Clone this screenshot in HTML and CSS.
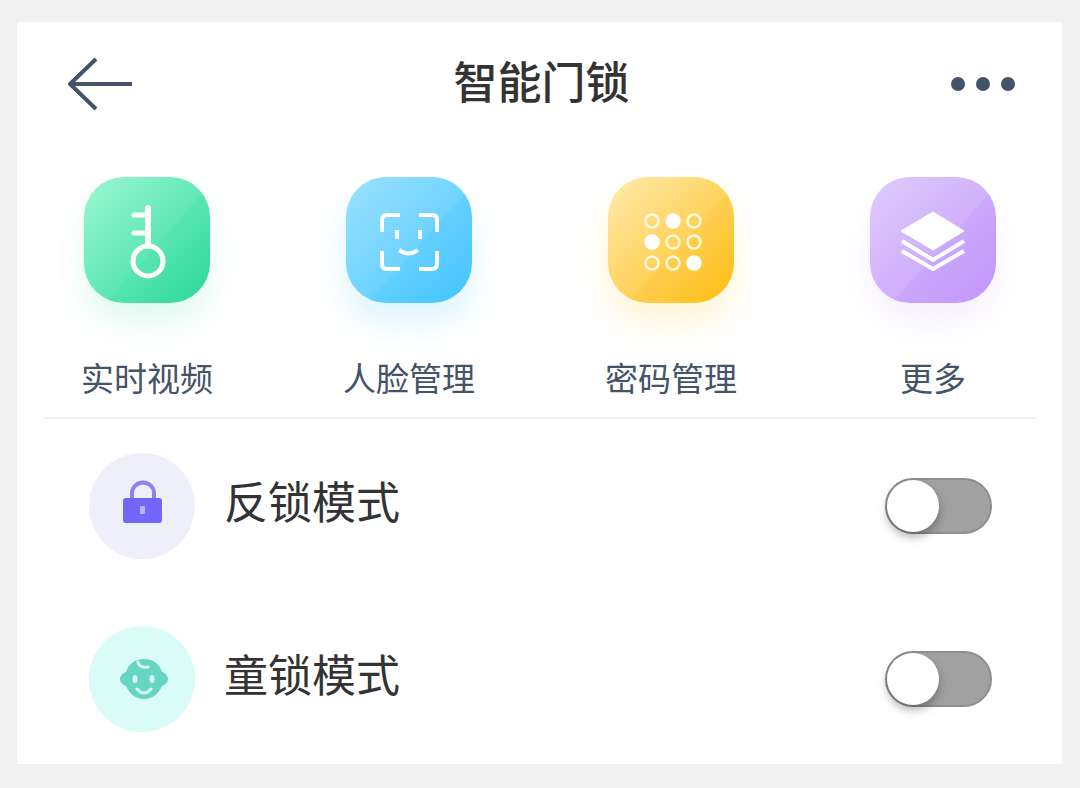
FILE: index.html
```html
<!DOCTYPE html>
<html lang="zh-CN">
<head>
<meta charset="utf-8">
<meta name="viewport" content="width=device-width, initial-scale=1">
<title>智能门锁</title>
<link rel="stylesheet" href="styles.css">
</head>
<body>
<main class="card">
  <header class="topbar">
    <button class="icon-button" type="button" aria-label="返回">
      <svg width="66" height="56" viewBox="0 0 66 56" fill="none" stroke="#445468" stroke-width="4">
        <path d="M65 28H4"/><path d="M29 3 3 28l26 25" stroke-linejoin="round"/>
      </svg>
    </button>
    <h1 class="title">智能门锁</h1>
    <button class="icon-button" type="button" aria-label="菜单">
      <svg width="66" height="56" viewBox="0 0 66 56" fill="#445468">
        <circle cx="8" cy="28" r="7"/><circle cx="33" cy="28" r="7"/><circle cx="58" cy="28" r="7"/>
      </svg>
    </button>
  </header>

  <nav class="actions" aria-label="快捷功能">
    <button class="action" type="button">
      <svg class="tile tile-green" viewBox="0 0 126 126" fill="none" stroke="#fff">
        <path class="sheen" d="M130 4 18 130H130z"/>
        <circle cx="64" cy="84" r="15" stroke-width="5"/>
        <path d="M64 69V31" stroke-width="6" stroke-linecap="round"/>
        <path d="M64 38H50M64 56H50" stroke-width="5" stroke-linecap="round"/>
      </svg>
      <span class="action-label">实时视频</span>
    </button>
    <button class="action" type="button">
      <svg class="tile tile-blue" viewBox="0 0 126 126" fill="none" stroke="#fff">
        <path class="sheen" d="M130 4 18 130H130z"/>
        <path d="M36 55V43q0-5 5-5H54M73 38H86q5 0 5 5V55M91 74V87q0 5-5 5H73M54 92H41q-5 0-5-5V74" stroke-width="4"/>
        <path d="M51 53v9M74 53v9" stroke-width="4"/>
        <path d="M53 73Q63 80 72 73" stroke-width="4"/>
      </svg>
      <span class="action-label">人脸管理</span>
    </button>
    <button class="action" type="button">
      <svg class="tile tile-yellow" viewBox="0 0 126 126" fill="none" stroke="#fff" stroke-width="2.5">
        <path class="sheen" d="M130 4 18 130H130z"/>
        <g stroke="#fff9df">
          <circle cx="44" cy="44" r="6.5"/><circle cx="86" cy="44" r="6.5"/>
          <circle cx="65" cy="65" r="6.5"/><circle cx="86" cy="65" r="6.5"/>
          <circle cx="44" cy="86" r="6.5"/><circle cx="65" cy="86" r="6.5"/>
        </g>
        <g fill="#fff">
          <circle cx="65" cy="44" r="6.5"/><circle cx="44" cy="65" r="6.5"/><circle cx="86" cy="86" r="6.5"/>
        </g>
      </svg>
      <span class="action-label">密码管理</span>
    </button>
    <button class="action" type="button">
      <svg class="tile tile-purple" viewBox="0 0 126 126" fill="none" stroke="#fff">
        <path class="sheen" d="M130 4 18 130H130z"/>
        <path d="M63 35 94 54 63 73 31 54z" fill="#fff" stroke-width="1" stroke-linejoin="round"/>
        <path d="M32 64 63 83 94 64M32 74 63 92 94 74" stroke-width="4"/>
      </svg>
      <span class="action-label">更多</span>
    </button>
  </nav>

  <section class="modes">
    <div class="mode">
      <span class="badge badge-lock">
        <svg width="106" height="106" viewBox="0 0 106 106">
          <path d="M43 48V40a11 10.500 0 0 1 22 0V48" fill="none" stroke="#8b83f3" stroke-width="4"/>
          <rect x="34" y="45" width="39" height="25" rx="3" fill="#7267f8"/>
          <rect x="51" y="53" width="5" height="8" rx="1" fill="#b8b4fb"/>
        </svg>
      </span>
      <label class="mode-label" for="back-lock">反锁模式</label>
      <input class="switch" type="checkbox" role="switch" id="back-lock">
    </div>
    <div class="mode">
      <span class="badge badge-child">
        <svg width="106" height="106" viewBox="0 0 106 106">
          <path d="M55 33c10 0 16 6 18 13 3 1 6 4 6 7s-3 6-6 7c-3 7-9 13-18 13s-15-6-18-13c-3-1-6-4-6-7s3-6 6-7c2-7 8-13 18-13z" fill="#67d5c3"/>
          <path d="M49 36q1 6 10 5" fill="none" stroke="#d5faf3" stroke-width="3" stroke-linecap="round"/>
          <ellipse cx="46" cy="53" rx="2.500" ry="4" fill="#d5faf3"/><ellipse cx="63" cy="53" rx="2.500" ry="4" fill="#d5faf3"/>
          <path d="M48 63q7 8 14 0" fill="none" stroke="#d5faf3" stroke-width="3" stroke-linecap="round"/>
        </svg>
      </span>
      <label class="mode-label" for="child-lock">童锁模式</label>
      <input class="switch" type="checkbox" role="switch" id="child-lock">
    </div>
  </section>
</main>
</body>
</html>
```
FILE: styles.css
```css
* {
  box-sizing: border-box;
}

body {
  margin: 0;
  padding: 22px 18px 24px 17px;
  background: #f1f1f1;
  color: #333;
  font-family: "Noto Sans CJK SC", sans-serif;
}

button {
  padding: 0;
  border: 0;
  background: none;
  color: inherit;
  font: inherit;
  cursor: pointer;
}

svg {
  display: block;
}

.card {
  background: #fff;
}

.topbar {
  display: flex;
  align-items: center;
  justify-content: space-between;
  height: 124px;
  padding: 0 46px 0 50px;
}

.title {
  margin: 0;
  padding-bottom: 8px;
  font-size: 44px;
  line-height: 48px;
  font-weight: 500;
}

.actions {
  display: flex;
  justify-content: space-between;
  margin: 0 27px 0 28px;
  padding: 31px 35px 16px;
  border-bottom: 2px solid #f3f3f3;
}

.action {
  display: flex;
  flex-direction: column;
  align-items: center;
  gap: 50px;
  width: 134px;
}

.tile {
  width: 126px;
  height: 126px;
  border-radius: 40px;
}

.tile-green {
  background: linear-gradient(135deg, #91f4cd 10%, #3adda4 90%);
  box-shadow: 0 20px 32px #34dba024;
}

.tile-blue {
  background: linear-gradient(135deg, #94dfff 10%, #50caff 90%);
  box-shadow: 0 20px 32px #49c7ff2e;
}

.tile-yellow {
  background: linear-gradient(135deg, #ffe6a0 10%, #ffc223 90%);
  box-shadow: 0 20px 32px #ffc01a2e;
}

.tile-purple {
  background: linear-gradient(135deg, #dcc7fb 10%, #c69efb 90%);
  box-shadow: 0 20px 32px #c499fb24;
}

.sheen {
  fill: currentColor;
  stroke: none;
  opacity: 0.08;
}

.tile-green .sheen {
  color: #00cf83;
}

.tile-blue .sheen {
  color: #00aaff;
}

.tile-yellow .sheen {
  color: #ffb000;
}

.tile-purple .sheen {
  color: #a55cff;
}

.action-label {
  color: #445468;
  font-size: 33px;
  line-height: 48px;
}

.modes {
  display: flex;
  flex-direction: column;
  gap: 67px;
  padding: 34px 70px 32px 72px;
}

.mode {
  display: flex;
  align-items: center;
}

.badge {
  border-radius: 50%;
}

.badge-lock {
  background: #efeefb;
}

.badge-child {
  background: #d9fcf6;
}

.mode-label {
  flex: 1;
  padding: 0 0 12px 29px;
  font-size: 44px;
  line-height: 48px;
}

.switch {
  appearance: none;
  display: flex;
  width: 107px;
  height: 56px;
  margin: 0;
  border: 2px solid #8e8e8e;
  border-radius: 28px;
  background: #a1a1a1;
  cursor: pointer;
}

.switch::before {
  content: "";
  width: 52px;
  height: 52px;
  border-radius: 50%;
  background: #fff;
  box-shadow: 0 5px 10px #0000004d;
}

.switch:checked {
  justify-content: flex-end;
  border-color: #34c98f;
  background: #34dba0;
}
```
